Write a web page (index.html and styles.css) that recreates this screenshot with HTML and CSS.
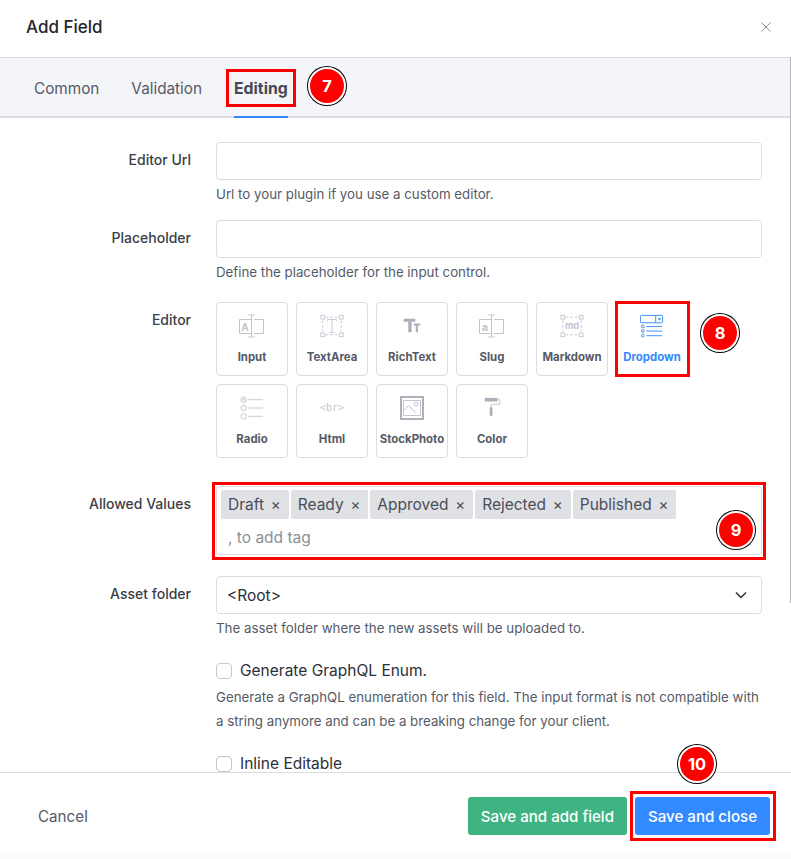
FILE: index.html
```html
<!DOCTYPE html>
<html lang="en">
<head>
<meta charset="utf-8">
<title>Add Field</title>
<link rel="stylesheet" href="styles.css">
</head>
<body>
<div class="dialog">
  <header class="head">
    <h1 class="title">Add Field</h1>
    <svg class="close" width="10" height="10" viewBox="0 0 10 10"><path d="M.5.5l9 9M9.5.5l-9 9" stroke="#8a8a8f" stroke-width="1" fill="none"/></svg>
  </header>
  <nav class="tabs">
    <span class="tab">Common</span>
    <span class="tab">Validation</span>
    <span class="tab tab-active">Editing</span>
  </nav>
  <main class="body">
    <div class="row r-url">
      <label class="lab">Editor Url</label>
      <div class="field"><div class="input"></div><p class="hint">Url to your plugin if you use a custom editor.</p></div>
    </div>
    <div class="row">
      <label class="lab">Placeholder</label>
      <div class="field"><div class="input"></div><p class="hint">Define the placeholder for the input control.</p></div>
    </div>
    <div class="row r-editor">
      <label class="lab lab-editor">Editor</label>
      <div class="editors">
        <div class="ed"><svg class="ic" width="26" height="24" viewBox="0 0 26 24"><g fill="none" stroke="#c3c6d0"><path d="M12 5.500H.5v14H12M15 5.500h9.500v14H15M12.500 1v22M9 1h7M9 23h7"/></g><text x="6" y="16.500" font-size="10" text-anchor="middle" class="svgt" fill="#c3c6d0">A</text></svg><span>Input</span></div>
        <div class="ed"><svg class="ic" width="24" height="24" viewBox="0 0 26 26"><g fill="none" stroke="#c3c6d0"><rect x="1" y="1.500" width="4" height="4"/><rect x="21" y="1.500" width="4" height="4"/><rect x="1" y="20.500" width="4" height="4"/><rect x="21" y="20.500" width="4" height="4"/><path stroke-dasharray="3 2" d="M6 3.500h14M6 22.500h14M3 7v12M23 7v12"/><path d="M8 8V6h10v2M13 6v14M10.500 20h5"/></g></svg><span>TextArea</span></div>
        <div class="ed"><svg class="ic ic-rich" width="20" height="15" viewBox="0 0 22 18"><path d="M1 1h14v3.500h-4.500V17H6.500V4.500H1zM13 6.500h8v2.500h-2.800v8h-2.700V9H13z" fill="#adb0bb"/></svg><span>RichText</span></div>
        <div class="ed"><svg class="ic" width="26" height="24" viewBox="0 0 26 24"><g fill="none" stroke="#c3c6d0"><path d="M12 5.500H.5v14H12M15 5.500h9.500v14H15M12.500 1v22M9 1h7M9 23h7"/></g><text x="6" y="16.500" font-size="11" text-anchor="middle" class="svgt" fill="#c3c6d0">a</text></svg><span>Slug</span></div>
        <div class="ed"><svg class="ic" width="24" height="24" viewBox="0 0 26 26"><g fill="none" stroke="#c3c6d0"><rect x="1" y="1.500" width="4" height="4"/><rect x="21" y="1.500" width="4" height="4"/><rect x="1" y="20.500" width="4" height="4"/><rect x="21" y="20.500" width="4" height="4"/><path stroke-dasharray="3 2" d="M6 3.500h14M6 22.500h14M3 7v12M23 7v12"/></g><text x="13" y="16.500" font-size="10" font-weight="700" text-anchor="middle" class="svgt" fill="#c3c6d0">md</text></svg><span>Markdown</span></div>
        <div class="ed ed-on"><svg class="ic" width="24" height="24" viewBox="0 0 26 26"><g fill="none" stroke="#3389ff"><rect x=".5" y="1.500" width="24" height="8" rx="1"/><path d="M17 1.500v8M7 13.500h17M7 18.500h17M7 23.500h17"/><circle cx="3" cy="13.500" r="1.500"/><circle cx="3" cy="18.500" r="1.500"/><circle cx="3" cy="23.500" r="1.500"/></g><path d="M19 4.500h4l-2 2.500z" fill="#3389ff"/></svg><span>Dropdown</span></div>
        <div class="ed"><svg class="ic" width="24" height="24" viewBox="0 0 26 26"><g fill="none" stroke="#c3c6d0"><circle cx="4" cy="4" r="3"/><circle cx="4" cy="13" r="3"/><circle cx="4" cy="22" r="3"/><path d="M9 4h16M9 13h16M9 22h16"/></g><circle cx="4" cy="4" r="1.200" fill="#c3c6d0"/></svg><span>Radio</span></div>
        <div class="ed ed-html"><span class="br">&lt;br&gt;</span><span>Html</span></div>
        <div class="ed"><svg class="ic" width="24" height="24" viewBox="0 0 24 24"><rect x="1" y="1" width="22" height="22" fill="none" stroke="#adb0bb" stroke-width="2"/><path d="M3.500 14.500l5-5 7 7M3.500 4.500h17v15h-17z" fill="none" stroke="#c3c6d0"/><circle cx="16" cy="8" r="2" fill="none" stroke="#c3c6d0"/></svg><span>StockPhoto</span></div>
        <div class="ed"><svg class="ic ic-color" width="18" height="20" viewBox="0 0 18 22"><path d="M1 1h14v4H1z" fill="#adb0bb"/><path d="M15 2.500h2.500V8H8v4" fill="none" stroke="#c3c6d0"/><rect x="6.500" y="11" width="3" height="10" rx="1.500" fill="#adb0bb"/></svg><span>Color</span></div>
      </div>
    </div>
    <div class="row r-tags">
      <label class="lab lab-tags">Allowed Values</label>
      <div class="tagbox">
        <div class="tags">
          <span class="tag">Draft<i>×</i></span>
          <span class="tag">Ready<i>×</i></span>
          <span class="tag">Approved<i>×</i></span>
          <span class="tag">Rejected<i>×</i></span>
          <span class="tag">Published<i>×</i></span>
        </div>
        <div class="tagph">, to add tag</div>
      </div>
    </div>
    <div class="row r-asset">
      <label class="lab">Asset folder</label>
      <div class="field">
        <div class="input select"><span>&lt;Root&gt;</span><svg width="12" height="8" viewBox="0 0 12 8"><path d="M1 1.500l5 5 5-5" fill="none" stroke="#2c3038" stroke-width="1.500"/></svg></div>
        <p class="hint">The asset folder where the new assets will be uploaded to.</p>
      </div>
    </div>
    <div class="row r-check">
      <span class="lab"></span>
      <div class="field">
        <div class="check"><span class="box"></span>Generate GraphQL Enum.</div>
        <p class="hint hint-long">Generate a GraphQL enumeration for this field. The input format is not compatible with a string anymore and can be a breaking change for your client.</p>
        <div class="check check-2"><span class="box"></span>Inline Editable</div>
      </div>
    </div>
  </main>
  <footer class="foot">
    <span class="cancel">Cancel</span>
    <div class="btns">
      <span class="btn green">Save and add field</span>
      <span class="btn blue">Save and close</span>
    </div>
  </footer>
</div>
<div class="scrollline"></div>
<div class="mark m-tab"></div>
<div class="mark m-drop"></div>
<div class="mark m-tags"></div>
<div class="mark m-save"></div>
<span class="num n7">7</span>
<span class="num n8">8</span>
<span class="num n9">9</span>
<span class="num n10">10</span>
</body>
</html>
```
FILE: styles.css
```css
* { box-sizing: border-box; }
html, body { margin: 0; height: 100%; }
body {
  position: relative;
  width: 791px;
  height: 859px;
  overflow: hidden;
  background: #fff;
  font-family: Inter, "Liberation Sans", sans-serif;
  color: #2c3038;
}
.dialog { display: flex; flex-direction: column; height: 859px; }
.head {
  height: 57px;
  flex: none;
  padding: 0 20px 4px 26px;
  display: flex;
  align-items: center;
  justify-content: space-between;
}
.title { margin: 0; font-size: 17px; font-weight: 500; color: #23262c; }
.tabs {
  height: 61px;
  flex: none;
  background: #f4f5f9;
  border-top: 1px solid #dcdde2;
  border-bottom: 2px solid #dcdde2;
  padding-left: 34px;
  display: flex;
  gap: 32px;
  align-items: stretch;
}
.tab {
  font-size: 15.3px;
  line-height: 61px;
  color: #555a66;
  margin-bottom: -2px;
  height: 60px;
}
.tab-active { font-size: 15.8px; font-weight: 700; color: #444852; border-bottom: 2px solid #3389ff; }
.body { flex: 1; overflow: hidden; padding-top: 24px; }
.row { display: flex; gap: 25px; padding-right: 29px; margin-bottom: 12px; }
.lab {
  width: 191px;
  flex: none;
  text-align: right;
  font-size: 14px;
  font-weight: 500;
  line-height: 36px;
  color: #3a3e47;
}
.field { flex: 1; min-width: 0; }
.input {
  height: 38px;
  border: 1px solid #dcdde2;
  border-radius: 4px;
  background: #fff;
}
.hint { margin: 4px 0 0; font-size: 13.3px; line-height: 20px; color: #555a66; }
.r-url { height: 66px; }
.row.r-editor { margin-top: 20px; margin-bottom: 0; }
.lab-editor { line-height: 36px; }
.editors { display: grid; grid-template-columns: repeat(6, 72px); grid-auto-rows: 74px; gap: 8px; }
.ed {
  border: 1px solid #dcdde2;
  border-radius: 4px;
  display: flex;
  flex-direction: column;
  align-items: center;
  font-size: 11.4px;
  font-weight: 700;
  color: #555a66;
  white-space: nowrap;
  position: relative;
}
.ed > span:last-child { position: absolute; top: 47px; left: 0; right: 0; text-align: center; line-height: 14px; }
.ic { margin-top: 11px; }
.ic-rich { margin-top: 15px; }
.ic-color { margin-top: 12px; }
.ed-on { color: #3389ff; }
.br { font-family: "DejaVu Sans Mono", monospace; font-size: 10px; font-weight: 400; color: #c3c6d0; margin-top: 17px; }
.svgt { font-family: Inter, sans-serif; }
.row.r-tags { margin-top: 28px; margin-bottom: 21px; }
.lab-tags { line-height: 36px; }
.tagbox { flex: 1; height: 69px; border: 1px solid #dcdde2; border-radius: 4px; padding: 3px 4px 0; }
.tags { display: flex; gap: 2px; }
.tag {
  height: 29px;
  background: #e0e1e5;
  border-radius: 2px;
  padding: 0 8px 0 7px;
  font-size: 15.5px;
  line-height: 29px;
  color: #4a4e58;
  white-space: nowrap;
}
.tag i { font-style: normal; margin-left: 6.75px; font-size: 15px; }
.tagph { font-size: 15.5px; line-height: 34px; color: #8b8f9b; padding-left: 7px; margin-top: 2px; }
.row.r-asset { margin-bottom: 22px; }
.select { display: flex; align-items: center; justify-content: space-between; padding: 0 14px 0 10px; font-size: 15.5px; color: #2c3038; }
.check { display: flex; align-items: center; gap: 8px; font-size: 15.5px; line-height: 22px; color: #2c3038; }
.box { width: 16px; height: 16px; border: 1px solid #c6c8cf; border-radius: 4px; background: #fff; flex: none; }
.hint-long { margin-top: 3px; line-height: 24px; }
.check-2 { margin-top: 20px; }
.foot {
  height: 87px;
  flex: none;
  border-top: 1px solid #dcdde2;
  padding: 0 21px 0 38px;
  display: flex;
  align-items: center;
  justify-content: space-between;
  background: linear-gradient(#fff 90%, #fafafa);
}
.cancel { font-size: 15.2px; color: #555a66; }
.btns { display: flex; gap: 8px; }
.btn { height: 38px; border-radius: 3px; padding: 0 13px; font-size: 15.1px; font-weight: 500; line-height: 39px; color: #fff; }
.green { background: #3fb482; }
.blue { background: #3389ff; }
.scrollline { position: absolute; left: 790px; top: 57px; width: 1px; height: 546px; background: #b9b9bb; }
.mark { position: absolute; border: 3px solid #f00; }
.m-tab { left: 226px; top: 69px; width: 70px; height: 38px; }
.m-drop { left: 615px; top: 301px; width: 75px; height: 76px; }
.m-tags { left: 212px; top: 482px; width: 554px; height: 78px; }
.m-save { left: 630px; top: 791px; width: 146px; height: 50px; }
.num {
  position: absolute;
  width: 38px;
  height: 38px;
  border-radius: 50%;
  background: #f00;
  border: 2px solid #fff;
  box-shadow: 0 0 0 1px #000;
  color: #fff;
  font-size: 16.5px;
  font-weight: 700;
  line-height: 34px;
  text-align: center;
}
.n7 { left: 308px; top: 67px; }
.n8 { left: 701px; top: 314px; }
.n9 { left: 717px; top: 511px; }
.n10 { left: 678px; top: 745px; }
```
